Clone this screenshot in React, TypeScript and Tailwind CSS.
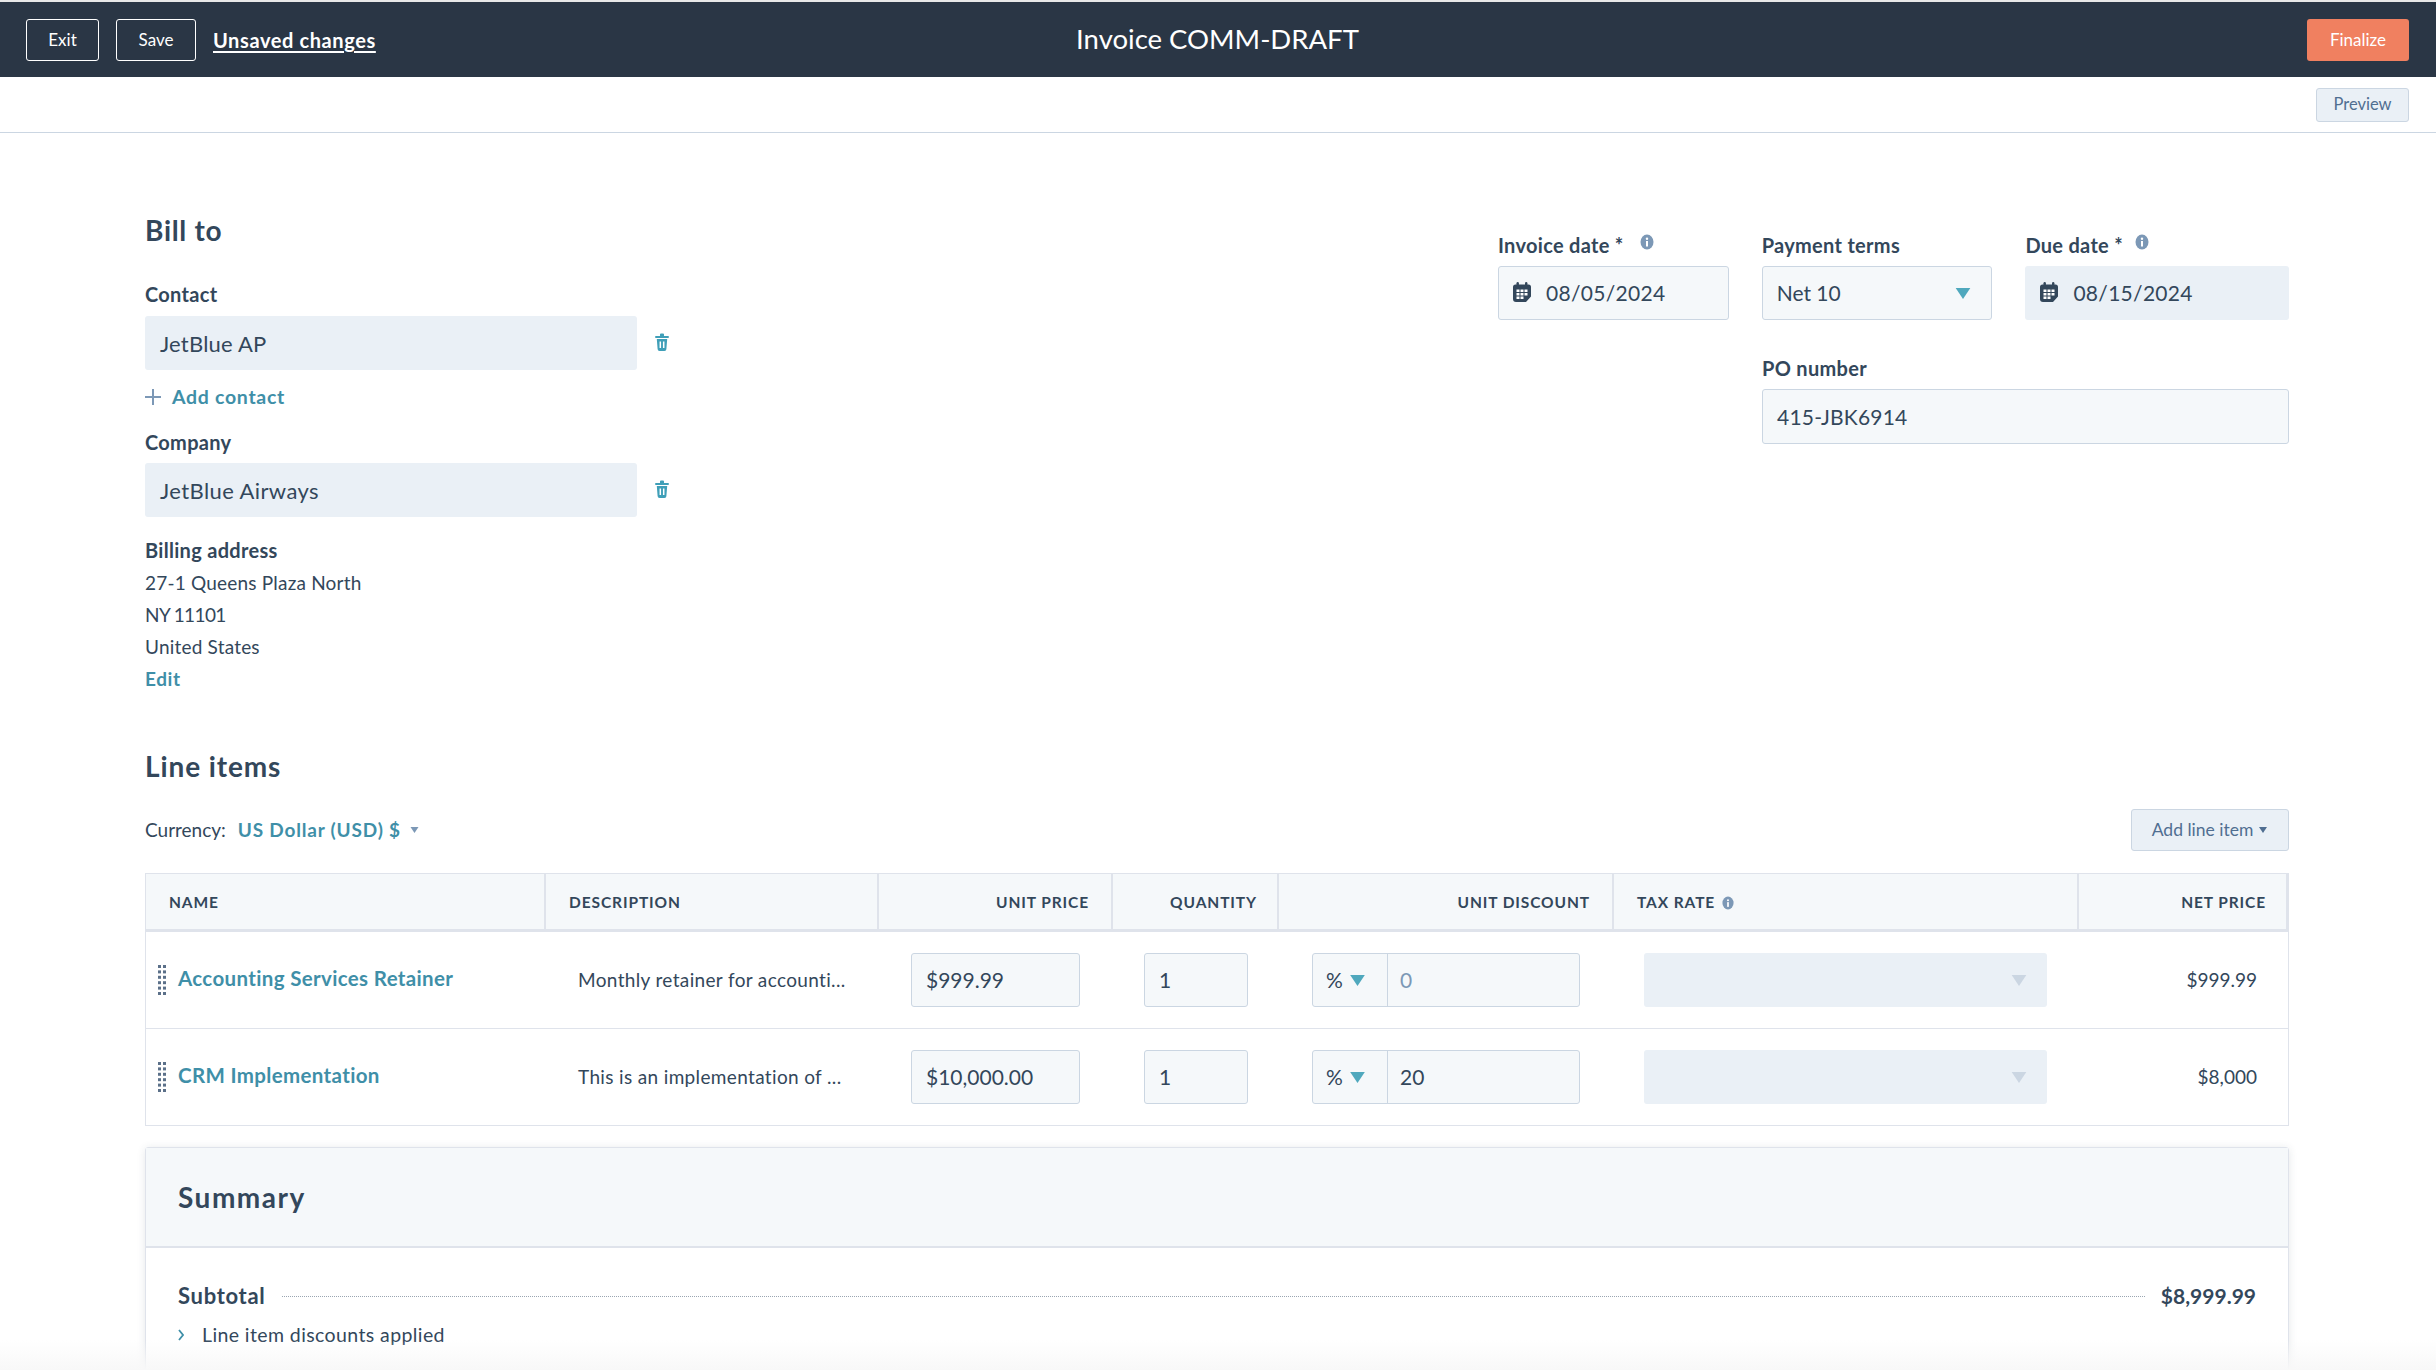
import type { ReactNode } from "react";

const INK = "text-[#33475b]";
const COLS = "grid grid-cols-[400px_333px_234px_166px_335px_465px_1fr]";

function InfoIcon({ className }: { className?: string }) {
  return (
    <svg viewBox="0 0 14 16" className={className}>
      <ellipse cx="7" cy="8" rx="6.5" ry="7.5" fill="#7c98b6" />
      <rect x="6" y="7" width="2" height="5.5" fill="#fff" />
      <circle cx="7" cy="4.8" r="1.2" fill="#fff" />
    </svg>
  );
}

function CalendarIcon() {
  return (
    <svg viewBox="0 0 18 20" className="mb-[3px] h-[20px] w-[18px] shrink-0">
      <path d="M0 5a2.500 2.500 0 0 1 2.500-2.500h13A2.500 2.500 0 0 1 18 5v9.500L13 20H3a3 3 0 0 1-3-3z" fill="#33475b" />
      <rect x="3.500" y="0" width="2.400" height="5" rx="1.200" fill="#33475b" />
      <rect x="12" y="0" width="2.400" height="5" rx="1.200" fill="#33475b" />
      <path d="M3.500 7.500h3v2.500h-3zm4 0h3v2.500h-3zm4 0h3v2.500h-3zM3.500 11h3v2.500h-3zm4 0h3v2.500h-3zm4 0h3v2.500h-3zM3.500 14.500h3V17h-3zm4 0h3V17h-3z" fill="#fff" />
    </svg>
  );
}

function TrashIcon() {
  return (
    <svg viewBox="0 0 14 18" className="h-[18px] w-[14px]">
      <path d="M5 1.500a1 1 0 0 1 1-1h2a1 1 0 0 1 1 1V3h4a1 1 0 0 1 0 2H1a1 1 0 0 1 0-2h4z" fill="#3f9fb8" />
      <path d="M1.800 6h10.400l-.8 10a2 2 0 0 1-2 2H4.600a2 2 0 0 1-2-2z" fill="#3f9fb8" />
      <path d="M5.300 8.500v6.500M8.700 8.500v6.500" stroke="#fff" strokeWidth="1.500" />
    </svg>
  );
}

function Caret({ color = "#4fa8bd", className = "h-[9px] w-[13px]" }: { color?: string; className?: string }) {
  return (
    <svg viewBox="0 0 12 9" className={className}>
      <path d="M0 0h12L6 9z" fill={color} />
    </svg>
  );
}

function Grip() {
  const rows = [0, 1, 2, 3, 4, 5];
  return (
    <svg viewBox="0 0 8 30" className="h-[30px] w-[8px] shrink-0">
      {rows.map((row) => (
        <g key={row} fill="#5b7089">
          <rect x="0" y={row * 5.4} width="3" height="3" />
          <rect x="5" y={row * 5.4} width="3" height="3" />
        </g>
      ))}
    </svg>
  );
}

function Label({ children }: { children: ReactNode }) {
  return <div className={`h-[24px] text-[20px] leading-[22px] font-bold tracking-[0.3px] ${INK}`}>{children}</div>;
}

function Field({ children, className = "" }: { children: ReactNode; className?: string }) {
  return (
    <div className={`flex h-[54px] items-center rounded-[3px] border border-[#cbd6e2] bg-[#f5f8fa] px-[14px] text-[21px] ${INK} ${className}`}>
      {children}
    </div>
  );
}

function ReadonlyField({ children, className = "" }: { children: ReactNode; className?: string }) {
  return (
    <div className={`flex h-[54px] items-center rounded-[3px] bg-[#eaf0f6] px-[15px] text-[21px] ${INK} ${className}`}>
      {children}
    </div>
  );
}

function HeaderCell({ children, className = "" }: { children: ReactNode; className?: string }) {
  return (
    <div className={`flex items-center border-r-2 border-[#dfe3eb] pt-[2px] pl-[23px] text-[15.500px] font-bold tracking-[0.9px] ${className}`}>
      {children}
    </div>
  );
}

type LineItem = {
  name: string;
  description: string;
  price: string;
  discount: string;
  net: string;
};

const lineItems: LineItem[] = [
  {
    name: "Accounting Services Retainer",
    description: "Monthly retainer for accounti...",
    price: "$999.99",
    discount: "0",
    net: "$999.99",
  },
  {
    name: "CRM Implementation",
    description: "This is an implementation of ...",
    price: "$10,000.00",
    discount: "20",
    net: "$8,000",
  },
];

function LineItemRow({ item }: { item: LineItem }) {
  return (
    <div className={`${COLS} h-[97px] items-center border-t border-[#dfe3eb] first:border-t-0`}>
      <div className="flex items-center gap-[12px] pl-[12px]">
        <Grip />
        <span className="-mt-[4px] text-[20.500px] font-bold tracking-[0.35px] text-[#3f8fa8]">{item.name}</span>
      </div>
      <div className="pl-[32px] text-[19px] tracking-[0.35px]">{item.description}</div>
      <div className="pl-[32px]">
        <Field className="w-[169px]">{item.price}</Field>
      </div>
      <div className="pl-[31px]">
        <Field className="w-[104px]">1</Field>
      </div>
      <div className="pl-[33px]">
        <div className="flex h-[54px] w-[268px] items-center rounded-[3px] border border-[#cbd6e2] bg-[#f5f8fa] text-[21px]">
          <div className="flex h-full w-[75px] items-center gap-[7px] border-r border-[#cbd6e2] pl-[13px]">
            <span>%</span>
            <Caret className="h-[11px] w-[15px]" />
          </div>
          <span className={`pl-[12px] ${item.discount === "0" ? "text-[#7c98b6]" : ""}`}>{item.discount}</span>
        </div>
      </div>
      <div className="pl-[30px]">
        <ReadonlyField className="w-[403px] justify-end pr-[20px]">
          <Caret color="#cbd6e2" className="h-[11px] w-[16px]" />
        </ReadonlyField>
      </div>
      <div className="pr-[31px] text-right text-[19px]">{item.net}</div>
    </div>
  );
}

export default function App() {
  return (
    <div className={`relative h-[1370px] overflow-hidden bg-white font-['Lato',sans-serif] ${INK}`}>
      <div className="h-[2px] bg-[#e8e8e8]" />
      <header className="grid h-[75px] grid-cols-[1fr_auto_1fr] items-center bg-[#2a3645] pr-[27px] pl-[26px]">
        <div className="flex items-center gap-[17px]">
          <button className="h-[42px] w-[73px] rounded-[3px] border border-white text-[17px] text-white">Exit</button>
          <button className="h-[42px] w-[80px] rounded-[3px] border border-white text-[17px] text-white">Save</button>
          <span className="text-[20px] font-bold tracking-[0.6px] text-white underline underline-offset-[3px]">Unsaved changes</span>
        </div>
        <h1 className="-mt-[1px] text-[27.500px] text-white">Invoice COMM-DRAFT</h1>
        <div className="flex justify-end">
          <button className="h-[42px] w-[102px] rounded-[3px] bg-[#f08060] text-[17px] text-white">Finalize</button>
        </div>
      </header>
      <div className="flex h-[56px] items-center justify-end border-b border-[#cbd6e2] pr-[27px]">
        <button className="h-[34px] w-[93px] rounded-[3px] border border-[#cbd6e2] bg-[#eaf0f6] text-[16.500px] text-[#506e91]">Preview</button>
      </div>

      <main className="pt-[79px] pr-[147px] pl-[145px]">
        <div className="flex justify-between">
          <section>
            <h2 className="text-[28px] leading-[36px] font-bold tracking-[0.7px]">Bill to</h2>
            <div className="mt-[35px]">
              <Label>Contact</Label>
            </div>
            <div className="mt-[9px] flex items-center">
              <ReadonlyField className="w-[492px] text-[22px] tracking-[0.2px]">JetBlue AP</ReadonlyField>
              <span className="mb-[3px] ml-[18px]">
                <TrashIcon />
              </span>
            </div>
            <div className="mt-[15px] flex h-[24px] items-center gap-[11px] text-[19.500px] font-bold tracking-[0.7px] text-[#3f8fa8]">
              <svg viewBox="0 0 16 16" className="h-[16px] w-[16px]">
                <path d="M8 0v16M0 8h16" stroke="#7c98b6" strokeWidth="2" />
              </svg>
              Add contact
            </div>
            <div className="mt-[22px]">
              <Label>Company</Label>
            </div>
            <div className="mt-[8px] flex items-center">
              <ReadonlyField className="w-[492px] text-[22px] tracking-[0.4px]">JetBlue Airways</ReadonlyField>
              <span className="mb-[3px] ml-[18px]">
                <TrashIcon />
              </span>
            </div>
            <div className="mt-[22px]">
              <Label>Billing address</Label>
            </div>
            <div className="mt-[4px] text-[19px] leading-[32px] tracking-[0.2px]">
              <div>27-1 Queens Plaza North</div>
              <div className="tracking-[-0.6px]">NY 11101</div>
              <div>United States</div>
              <div className="font-bold tracking-[0.6px] text-[#3f8fa8]">Edit</div>
            </div>
          </section>

          <section className="w-[791px] pt-[22px]">
            <div className="flex gap-[33px]">
              <div className="w-[231px]">
                <div className="flex items-start gap-[16px]">
                  <Label>Invoice date *</Label>
                  <InfoIcon className="h-[16px] w-[14px]" />
                </div>
                <Field className="mt-[8px] gap-[15px]">
                  <CalendarIcon />
                  <span className="tracking-[0.3px]">08/05/2024</span>
                </Field>
              </div>
              <div className="w-[231px]">
                <Label>Payment terms</Label>
                <Field className="mt-[8px] justify-between pr-[20px]">
                  Net 10
                  <Caret className="h-[11px] w-[16px]" />
                </Field>
              </div>
              <div className="w-[264px]">
                <div className="flex items-start gap-[12px]">
                  <Label>Due date *</Label>
                  <InfoIcon className="h-[16px] w-[14px]" />
                </div>
                <ReadonlyField className="mt-[8px] gap-[15px]">
                  <CalendarIcon />
                  <span className="tracking-[0.3px]">08/15/2024</span>
                </ReadonlyField>
              </div>
            </div>
            <div className="mt-[37px] ml-[264px]">
              <Label>PO number</Label>
              <Field className="mt-[8px] h-[55px] tracking-[0.2px]">415-JBK6914</Field>
            </div>
          </section>
        </div>

        <h2 className="mt-[53px] text-[28px] leading-[36px] font-bold tracking-[0.9px]">Line items</h2>

        <div className="mt-[25px] flex h-[42px] items-center justify-between">
          <div className="flex items-center text-[19px]">
            <span>Currency:</span>
            <span className="ml-[12px] font-bold tracking-[0.8px] text-[#3f8fa8]">US Dollar (USD) $</span>
            <Caret color="#7c98b6" className="ml-[8px] h-[6px] w-[11px]" />
          </div>
          <button className="flex h-[42px] w-[158px] items-center justify-center gap-[5px] rounded-[3px] border border-[#cbd6e2] bg-[#eaf0f6] text-[17.500px] text-[#506e91]">
            Add line item
            <Caret color="#506e91" className="h-[6px] w-[10px]" />
          </button>
        </div>

        <div className="mt-[22px] border border-[#dfe3eb]">
          <div className={`${COLS} h-[57px] border-b-2 border-[#dfe3eb] bg-[#f5f8fa]`}>
            <HeaderCell>NAME</HeaderCell>
            <HeaderCell>DESCRIPTION</HeaderCell>
            <HeaderCell className="justify-end pr-[22px]">UNIT PRICE</HeaderCell>
            <HeaderCell className="justify-end pr-[20px]">QUANTITY</HeaderCell>
            <HeaderCell className="justify-end pr-[22px]">UNIT DISCOUNT</HeaderCell>
            <HeaderCell className="pl-[22px]">
              <span>TAX RATE</span>
              <InfoIcon className="ml-[7px] h-[14px] w-[12px]" />
            </HeaderCell>
            <HeaderCell className="justify-end pr-[20px]">NET PRICE</HeaderCell>
          </div>
          {lineItems.map((item) => (
            <LineItemRow key={item.name} item={item} />
          ))}
        </div>

        <section className="mt-[21px] rounded-t-[3px] border border-[#dfe3eb] shadow-[0_1px_8px_rgba(45,62,80,0.12)]">
          <div className="flex h-[100px] items-center border-b-2 border-[#dfe3eb] bg-[#f5f8fa] pl-[32px]">
            <h2 className="text-[28px] font-bold tracking-[1.5px]">Summary</h2>
          </div>
          <div className="h-[140px] px-[32px] pt-[35px]">
            <div className="flex items-center">
              <span className="text-[22px] leading-[26px] font-bold tracking-[0.7px]">Subtotal</span>
              <span className="mx-[16px] flex-1 border-t border-dotted border-[#9aa5b1]" />
              <span className="text-[21px] leading-[26px] font-bold">$8,999.99</span>
            </div>
            <div className="mt-[11px] flex items-center gap-[18px] text-[19.500px] tracking-[0.4px]">
              <svg viewBox="0 0 6 12" className="h-[12px] w-[6px]">
                <path d="M1 1l4 5-4 5" fill="none" stroke="#3f8fa8" strokeWidth="1.800" />
              </svg>
              Line item discounts applied
            </div>
          </div>
        </section>
      </main>
      <div className="pointer-events-none absolute right-0 bottom-0 left-0 h-[30px] bg-linear-to-b from-transparent to-[#f8f8f8]" />
    </div>
  );
}
